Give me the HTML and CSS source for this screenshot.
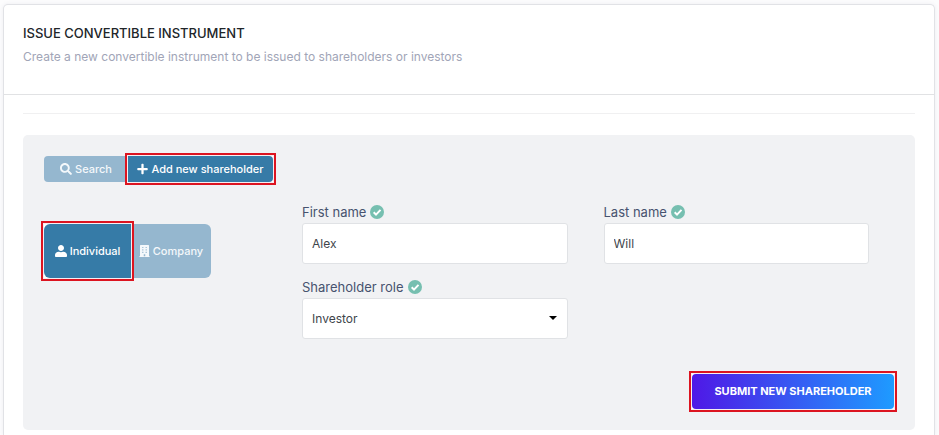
FILE: index.html
```html
<!DOCTYPE html>
<html lang="en">
<head>
<meta charset="utf-8">
<title>Issue convertible instrument</title>
<link rel="stylesheet" href="styles.css">
</head>
<body>
<main class="card">
  <header class="card-header">
    <h1>ISSUE CONVERTIBLE INSTRUMENT</h1>
    <p>Create a new convertible instrument to be issued to shareholders or investors</p>
  </header>
  <div class="card-body">
    <hr>
    <form class="panel">
      <div class="tabs">
        <button type="button" class="tab">
          <svg class="icon" viewBox="0 0 512 512"><path d="M505 443L405 343c-4-4-11-7-17-7h-16c28-35 44-80 44-128C416 93 323 0 208 0S0 93 0 208s93 208 208 208c48 0 93-16 128-44v16c0 6 3 13 7 17l100 100c9 9 25 9 34 0l28-28c9-10 9-25 0-34zM208 336c-71 0-128-57-128-128S137 80 208 80s128 57 128 128-57 128-128 128z"/></svg>
          Search
        </button>
        <div class="marked">
          <button type="button" class="tab active last">
            <svg class="icon plus" viewBox="0 0 448 512"><path d="M416 208H272V64c0-18-14-32-32-32h-32c-18 0-32 14-32 32v144H32c-18 0-32 14-32 32v32c0 18 14 32 32 32h144v144c0 18 14 32 32 32h32c18 0 32-14 32-32V304h144c18 0 32-14 32-32v-32c0-18-14-32-32-32z"/></svg>
            Add new shareholder
          </button>
        </div>
      </div>
      <div class="details">
        <div class="types">
          <div class="marked">
            <button type="button" class="type active">
              <svg class="icon" viewBox="0 0 512 512"><path d="M256 256c71 0 128-57 128-128S327 0 256 0 128 57 128 128s57 128 128 128zm100 32h-17c-25 12-53 18-83 18s-58-6-83-18h-17C71 288 0 350 0 430v34c0 27 21 48 48 48h416c27 0 48-21 48-48v-34c0-80-71-142-156-142z"/></svg>
              Individual
            </button>
          </div>
          <button type="button" class="type last">
            <svg class="icon building" viewBox="0 0 448 512"><path fill-rule="evenodd" d="M436 480h-20V24c0-13-11-24-24-24H56C43 0 32 11 32 24v456H12c-7 0-12 5-12 12v20h448v-20c0-7-5-12-12-12zM128 80h48v48h-48zM272 80h48v48h-48zM128 184h48v48h-48zM272 184h48v48h-48zM128 288h48v48h-48zM272 288h48v48h-48zM192 392h64v88h-64z"/></svg>
            Company
          </button>
        </div>
        <div class="fields">
          <div class="field">
            <label for="first">First name <svg class="check" viewBox="0 0 14 14"><circle cx="7" cy="7" r="7"/><path d="M3.7 7.3l2.3 2.3 4.5-4.7"/></svg></label>
            <input id="first" type="text" value="Alex">
          </div>
          <div class="field">
            <label for="last">Last name <svg class="check" viewBox="0 0 14 14"><circle cx="7" cy="7" r="7"/><path d="M3.7 7.3l2.3 2.3 4.5-4.7"/></svg></label>
            <input id="last" type="text" value="Will">
          </div>
          <div class="field">
            <label for="role">Shareholder role <svg class="check" viewBox="0 0 14 14"><circle cx="7" cy="7" r="7"/><path d="M3.7 7.3l2.3 2.3 4.5-4.7"/></svg></label>
            <div class="select">
              <select id="role"><option>Investor</option></select>
              <svg class="caret" viewBox="0 0 8 4"><path d="M0 0h8L4 4z"/></svg>
            </div>
          </div>
        </div>
      </div>
      <div class="actions">
        <div class="marked">
          <button type="submit" class="submit">SUBMIT NEW SHAREHOLDER</button>
        </div>
      </div>
    </form>
  </div>
</main>
</body>
</html>
```
FILE: styles.css
```css
* { box-sizing: border-box; }

body {
  margin: 0;
  padding: 4px 4px 0 3px;
  background: #fcfcfd;
  font-family: Inter, "Liberation Sans", sans-serif;
  font-size: 12px;
}

button, input, select { font: inherit; }

.card {
  min-height: calc(100vh - 4px);
  background: #fff;
  border: 1px solid #e1e2e6;
  border-bottom: 0;
  border-radius: 5px 5px 0 0;
  box-shadow: 0 0 4px rgba(60, 70, 100, 0.08);
}

.card-header {
  padding: 19px 19px 28px;
  border-bottom: 1px solid #e1e2e4;
}

.card-header h1 {
  margin: 0;
  font-size: 13px;
  line-height: 18px;
  font-weight: 500;
  color: #212529;
}

.card-header p {
  margin: 6px 0 0;
  line-height: 18px;
  color: #a1a5b7;
}

.card-body { padding: 18px 19px 4px; }

hr {
  margin: 0 0 21px;
  border: 0;
  border-top: 1px solid #f0f0f1;
}

.panel {
  padding: 21px;
  background: #f1f2f4;
  border-radius: 5px;
}

.tabs, .types { display: flex; align-items: flex-start; }

.tab, .type {
  display: flex;
  align-items: center;
  justify-content: center;
  gap: 3px;
  padding: 0;
  border: 0;
  border-radius: 4px 0 0 4px;
  background: #95b7cf;
  color: #f4f8fb;
  font-size: 11px;
  font-weight: 500;
  white-space: nowrap;
}

.tab { width: 84px; height: 26px; }
.tab.last { width: 145px; border-radius: 0 4px 4px 0; }
.type { width: 87px; height: 54px; border-radius: 6px 0 0 6px; }
.type.last { width: 80px; border-radius: 0 6px 6px 0; }

.tab.active, .type.active { background: #367ba7; color: #fff; }

.marked {
  position: relative;
  background: #fff;
  outline: 2px solid #dc1420;
  outline-offset: 1px;
  box-shadow: 0 0 0 1px #f6eef2;
}

.icon { width: 12px; height: 12px; fill: currentColor; }
.plus, .building { width: 11px; }

.details {
  display: grid;
  grid-template-columns: 258px 1fr;
  margin-top: 22px;
}

.types { padding-top: 20px; }

.fields {
  display: grid;
  grid-template-columns: 1fr 1fr;
  gap: 15px 36px;
  padding-right: 25px;
}

.field label {
  display: flex;
  align-items: center;
  gap: 4px;
  height: 19px;
  padding-bottom: 3px;
  font-size: 13px;
  color: #47536f;
}

.check { width: 14px; height: 14px; fill: #76bfb0; }
.check path { fill: none; stroke: #fff; stroke-width: 2; }

input, select {
  display: block;
  width: 100%;
  height: 41px;
  padding: 0 9px;
  border: 1px solid #e0e2e5;
  border-radius: 3px;
  background: #fff;
  color: #40454b;
}

select { appearance: none; }

.select { position: relative; }

.caret {
  position: absolute;
  top: 18px;
  right: 11px;
  width: 8px;
  height: 4px;
  pointer-events: none;
}

.actions {
  display: flex;
  justify-content: flex-end;
  margin-top: 35px;
}

.submit {
  display: block;
  width: 202px;
  height: 35px;
  padding: 0 0 2px;
  border: 0;
  border-radius: 4px;
  background: linear-gradient(90deg, #4f18e6, #1e9bff);
  color: #fff;
  font-size: 11px;
  font-weight: 700;
}
```
